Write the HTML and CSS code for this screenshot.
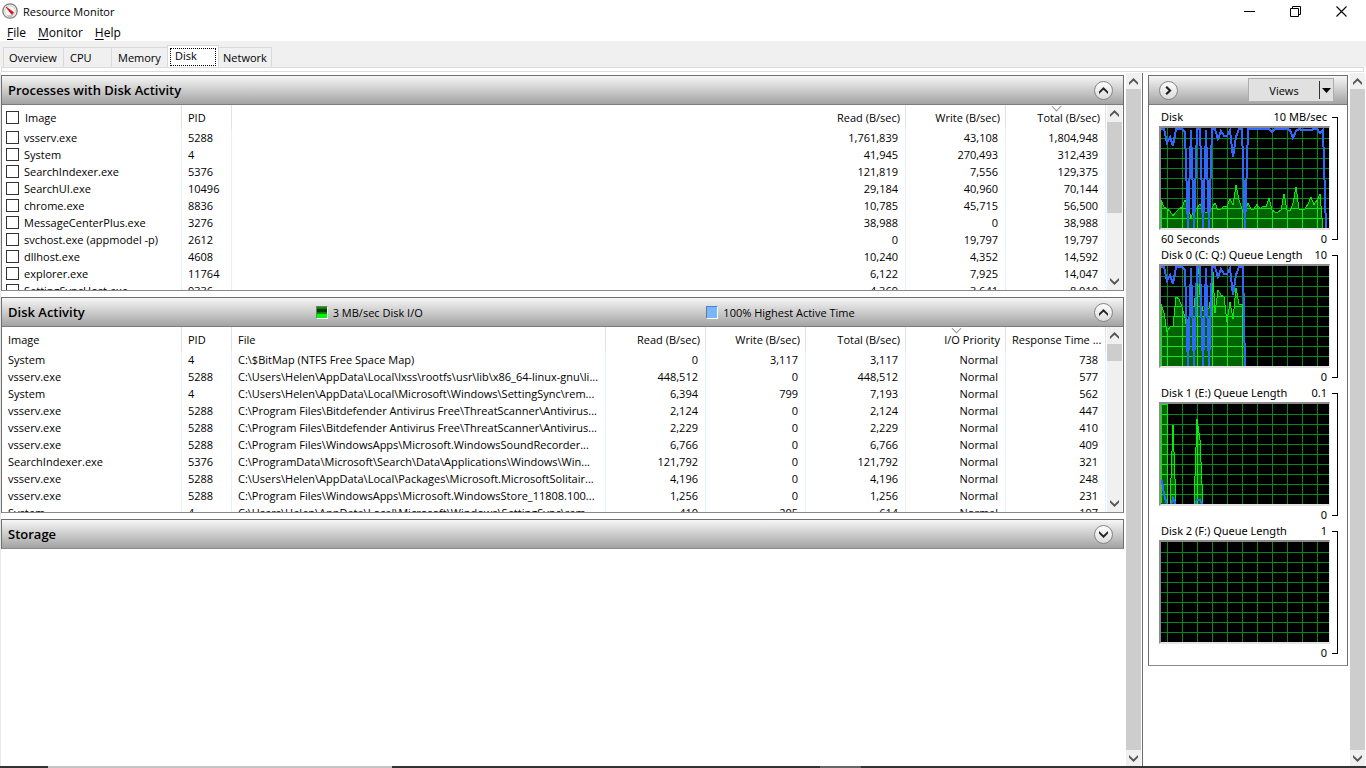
FILE: index.html
```
<!DOCTYPE html>
<html lang="en">
<head>
<meta charset="utf-8">
<title>Resource Monitor</title>
<link rel="stylesheet" href="styles.css">
</head>
<body>
<svg class="defs" aria-hidden="true">
  <defs>
    <symbol id="up" viewBox="0 0 9 7"><path d="M0 4.5 4.5 0 9 4.5V7L4.5 2.8 0 7z" fill="currentColor"/></symbol>
    <symbol id="down" viewBox="0 0 9 7"><path d="M0 2.5 4.5 7 9 2.5V0L4.5 4.2 0 0z" fill="currentColor"/></symbol>
    <path id="grid" d="M6.5 0V100M21.5 0V100M36.5 0V100M51.5 0V100M66.5 0V100M81.5 0V100M96.5 0V100M111.5 0V100M126.5 0V100M141.5 0V100M156.5 0V100M0 10.5H168M0 20.5H168M0 30.5H168M0 40.5H168M0 50.5H168M0 60.5H168M0 70.5H168M0 80.5H168M0 90.5H168"/>
    <path id="area0" d="M0 101V72L3 79 6 81 9 83 12 88 15 84 18 81 21 79 24 72 27 78 30 90 33 80 36 80 39 76 42 82 45 85 48 84 51 80 54 75 57 82 60 81 63 78 66 78 69 71 72 77 75 57 78 72 81 81 84 85 87 75 90 81 93 81 96 76 99 81 102 78 105 79 108 70 111 82 114 84 117 84 120 82 123 66 126 82 129 83 132 75 135 59 138 81 141 81 144 81 147 76 150 69 153 77 156 72 159 66 162 101z"/>
    <path id="area1" d="M0 101V38L3 47 6 66 9 61 12 60 15 31 18 33 21 41 24 52 27 69 30 42 33 40 36 15 38 2 39 29 42 45 48 42 51 25 52 6 54 47 57 24 60 29 63 31 66 56 69 36 72 53 75 22 78 38 82 38 84 101z"/>
    <path id="area2" d="M0 101 1 0H6L7 101zM9 101 12 21 15 101zM33 101 36 15 39 36 42 101z"/>
    <clipPath id="clip0"><use href="#area0"/></clipPath>
    <clipPath id="clip1"><use href="#area1"/></clipPath>
    <clipPath id="clip2"><use href="#area2"/></clipPath>
  </defs>
</svg>

<header class="titlebar">
  <svg class="app-icon" viewBox="0 0 16 16" aria-hidden="true">
    <circle cx="8" cy="8" r="7.2" fill="#f6f6f6" stroke="#7d7d7d" stroke-width="1.300"/>
    <circle cx="8" cy="8" r="5.300" fill="#fdf6f4" stroke="#c9c4c0" stroke-width=".8"/>
    <path d="M4 4 11.500 9.500 10 11.500z" fill="#d8141c" stroke="#c8141c" stroke-width=".9" stroke-linejoin="round"/>
    <path d="M5.500 13h5" stroke="#aaa" stroke-width="1"/>
  </svg>
  <h1>Resource Monitor</h1>
  <div class="window-controls">
    <button type="button" aria-label="Minimize"><svg width="11" height="11" viewBox="0 0 11 11"><path d="M0 5.5H11" stroke="#000"/></svg></button>
    <button type="button" aria-label="Restore"><svg width="11" height="11" viewBox="0 0 11 11" fill="none" stroke="#000"><path d="M.5 2.500h8v8h-8zM2.500 2.500V.5h8v8H8.500"/></svg></button>
    <button type="button" aria-label="Close"><svg width="11" height="11" viewBox="0 0 11 11"><path d="M.5.5l10 10M10.500.5l-10 10" stroke="#000" stroke-width="1.1"/></svg></button>
  </div>
</header>

<nav class="menubar" aria-label="Menu">
  <button type="button"><u>F</u>ile</button>
  <button type="button"><u>M</u>onitor</button>
  <button type="button"><u>H</u>elp</button>
</nav>

<div class="tabs" role="tablist">
  <button type="button" role="tab" class="tab tab-overview">Overview</button>
  <button type="button" role="tab" class="tab tab-cpu">CPU</button>
  <button type="button" role="tab" class="tab tab-memory">Memory</button>
  <button type="button" role="tab" class="tab tab-disk selected" aria-selected="true"><span>Disk</span></button>
  <button type="button" role="tab" class="tab tab-network">Network</button>
</div>
<div class="tab-edge"></div>

<div class="workspace">
  <main class="sections">
    <section class="panel">
      <div class="bar">
        <h2>Processes with Disk Activity</h2>
        <button type="button" class="round" aria-label="Collapse"><svg width="9" height="7"><use href="#up"/></svg></button>
      </div>
      <div class="list">
        <table>
          <colgroup><col class="c-image"><col class="c-pid"><col><col class="c-num"><col class="c-num"></colgroup>
          <thead><tr>
            <th><label><input type="checkbox">Image</label></th><th>PID</th><th class="n">Read (B/sec)</th><th class="n">Write (B/sec)</th>
            <th class="n sorted">Total (B/sec)</th>
          </tr></thead>
          <tbody>
            <tr><td><label><input type="checkbox">vsserv.exe</label></td><td>5288</td><td>1,761,839</td><td>43,108</td><td>1,804,948</td></tr>
            <tr><td><label><input type="checkbox">System</label></td><td>4</td><td>41,945</td><td>270,493</td><td>312,439</td></tr>
            <tr><td><label><input type="checkbox">SearchIndexer.exe</label></td><td>5376</td><td>121,819</td><td>7,556</td><td>129,375</td></tr>
            <tr><td><label><input type="checkbox">SearchUI.exe</label></td><td>10496</td><td>29,184</td><td>40,960</td><td>70,144</td></tr>
            <tr><td><label><input type="checkbox">chrome.exe</label></td><td>8836</td><td>10,785</td><td>45,715</td><td>56,500</td></tr>
            <tr><td><label><input type="checkbox">MessageCenterPlus.exe</label></td><td>3276</td><td>38,988</td><td>0</td><td>38,988</td></tr>
            <tr><td><label><input type="checkbox">svchost.exe (appmodel -p)</label></td><td>2612</td><td>0</td><td>19,797</td><td>19,797</td></tr>
            <tr><td><label><input type="checkbox">dllhost.exe</label></td><td>4608</td><td>10,240</td><td>4,352</td><td>14,592</td></tr>
            <tr><td><label><input type="checkbox">explorer.exe</label></td><td>11764</td><td>6,122</td><td>7,925</td><td>14,047</td></tr>
            <tr><td><label><input type="checkbox">SettingSyncHost.exe</label></td><td>9336</td><td>4,369</td><td>3,641</td><td>8,010</td></tr>
          </tbody>
        </table>
        <div class="scrollbar">
          <button type="button" aria-label="Scroll up"><svg width="9" height="7"><use href="#up"/></svg></button>
          <div class="thumb half"></div>
          <button type="button" class="end" aria-label="Scroll down"><svg width="9" height="7"><use href="#down"/></svg></button>
        </div>
      </div>
    </section>

    <section class="panel">
      <div class="bar">
        <div class="bar-grid">
          <h2>Disk Activity</h2>
          <span class="legend"><i class="swatch io"></i>3 MB/sec Disk I/O</span>
          <span class="legend"><i class="swatch active"></i>100% Highest Active Time</span>
        </div>
        <button type="button" class="round" aria-label="Collapse"><svg width="9" height="7"><use href="#up"/></svg></button>
      </div>
      <div class="list">
        <table class="files">
          <colgroup><col class="c-image"><col class="c-pid"><col><col class="c-num"><col class="c-num"><col class="c-num"><col class="c-num"><col class="c-num"></colgroup>
          <thead><tr>
            <th>Image</th><th>PID</th><th>File</th><th class="n">Read (B/sec)</th><th class="n">Write (B/sec)</th><th class="n">Total (B/sec)</th><th class="n sorted">I/O Priority</th><th class="n">Response Time ...</th>
          </tr></thead>
          <tbody>
            <tr><td>System</td><td>4</td><td>C:\$BitMap (NTFS Free Space Map)</td><td>0</td><td>3,117</td><td>3,117</td><td>Normal</td><td>738</td></tr>
            <tr><td>vsserv.exe</td><td>5288</td><td>C:\Users\Helen\AppData\Local\lxss\rootfs\usr\lib\x86_64-linux-gnu\li...</td><td>448,512</td><td>0</td><td>448,512</td><td>Normal</td><td>577</td></tr>
            <tr><td>System</td><td>4</td><td>C:\Users\Helen\AppData\Local\Microsoft\Windows\SettingSync\rem...</td><td>6,394</td><td>799</td><td>7,193</td><td>Normal</td><td>562</td></tr>
            <tr><td>vsserv.exe</td><td>5288</td><td>C:\Program Files\Bitdefender Antivirus Free\ThreatScanner\Antivirus...</td><td>2,124</td><td>0</td><td>2,124</td><td>Normal</td><td>447</td></tr>
            <tr><td>vsserv.exe</td><td>5288</td><td>C:\Program Files\Bitdefender Antivirus Free\ThreatScanner\Antivirus...</td><td>2,229</td><td>0</td><td>2,229</td><td>Normal</td><td>410</td></tr>
            <tr><td>vsserv.exe</td><td>5288</td><td>C:\Program Files\WindowsApps\Microsoft.WindowsSoundRecorder...</td><td>6,766</td><td>0</td><td>6,766</td><td>Normal</td><td>409</td></tr>
            <tr><td>SearchIndexer.exe</td><td>5376</td><td>C:\ProgramData\Microsoft\Search\Data\Applications\Windows\Win...</td><td>121,792</td><td>0</td><td>121,792</td><td>Normal</td><td>321</td></tr>
            <tr><td>vsserv.exe</td><td>5288</td><td>C:\Users\Helen\AppData\Local\Packages\Microsoft.MicrosoftSolitair...</td><td>4,196</td><td>0</td><td>4,196</td><td>Normal</td><td>248</td></tr>
            <tr><td>vsserv.exe</td><td>5288</td><td>C:\Program Files\WindowsApps\Microsoft.WindowsStore_11808.100...</td><td>1,256</td><td>0</td><td>1,256</td><td>Normal</td><td>231</td></tr>
            <tr><td>System</td><td>4</td><td>C:\Users\Helen\AppData\Local\Microsoft\Windows\SettingSync\rem...</td><td>410</td><td>205</td><td>614</td><td>Normal</td><td>197</td></tr>
          </tbody>
        </table>
        <div class="scrollbar">
          <button type="button" aria-label="Scroll up"><svg width="9" height="7"><use href="#up"/></svg></button>
          <div class="thumb short"></div>
          <button type="button" class="end" aria-label="Scroll down"><svg width="9" height="7"><use href="#down"/></svg></button>
        </div>
      </div>
    </section>

    <section class="panel">
      <div class="bar">
        <h2>Storage</h2>
        <button type="button" class="round" aria-label="Expand"><svg width="9" height="7"><use href="#down"/></svg></button>
      </div>
    </section>
  </main>
  <div class="scrollbar outer">
    <button type="button" aria-label="Scroll up"><svg width="9" height="7"><use href="#up"/></svg></button>
    <div class="thumb full"></div>
    <button type="button" class="end" aria-label="Scroll down"><svg width="9" height="7"><use href="#down"/></svg></button>
  </div>

  <aside class="side">
    <div class="panel">
      <div class="bar side-bar">
        <button type="button" class="round" aria-label="Hide graphs"><svg width="7" height="9" viewBox="0 0 7 9"><path d="M1.200.800 5 4.500 1.200 8.200" fill="none" stroke="currentColor" stroke-width="2.200"/></svg></button>
        <div class="views">
          <button type="button" class="views-main">Views</button>
          <button type="button" class="views-drop" aria-label="Choose view"><svg width="9" height="5" viewBox="0 0 9 5"><path d="M0 0H9L4.500 5z"/></svg></button>
        </div>
      </div>
      <div class="graphs">
        <figure class="graph">
          <div class="cap"><span>Disk</span><span>10 MB/sec</span></div>
          <svg class="plot" viewBox="0 0 168 100" preserveAspectRatio="none">
            <use href="#grid" class="g"/>
            <use href="#area0" class="a"/>
            <use href="#grid" class="gb" clip-path="url(#clip0)"/>
            <path class="b" d="M0 1 3 1 6 15 9 9 12 18 15 1H21L24 4 27 101 30 2 33 101 36 1H39L42 101 45 2 48 101 51 1H54L57 11 60 3 63 8H66L69 2 72 29 75 9 78 1H81L84 101 87 1H108L111 4 114 1H126L129 2 132 10 135 3 138 1 141 2H150L153 1H156L159 5 162 2 165 101"/>
          </svg>
          <div class="cap foot"><span>60 Seconds</span><span>0</span></div>
          <div class="bracket"></div>
        </figure>
        <figure class="graph">
          <div class="cap"><span>Disk 0 (C: Q:) Queue Length</span><span>10</span></div>
          <svg class="plot" viewBox="0 0 168 100" preserveAspectRatio="none">
            <use href="#grid" class="g"/>
            <use href="#area1" class="a"/>
            <use href="#grid" class="gb" clip-path="url(#clip1)"/>
            <path class="b" d="M0 1 3 1 6 15 9 9 12 18 15 1H21L24 4 27 101 30 2 33 101 36 1H39L42 101 45 2 48 101 51 1H54L57 11 60 3 63 8H66L69 2 72 29 75 9 78 1H82L84 101"/>
          </svg>
          <div class="cap foot"><span></span><span>0</span></div>
          <div class="bracket"></div>
        </figure>
        <figure class="graph">
          <div class="cap"><span>Disk 1 (E:) Queue Length</span><span>0.1</span></div>
          <svg class="plot" viewBox="0 0 168 100" preserveAspectRatio="none">
            <use href="#grid" class="g"/>
            <use href="#area2" class="a"/>
            <use href="#grid" class="gb" clip-path="url(#clip2)"/>
            <path class="b" d="M1 76 3 90 6 101M10 101 12 94 15 101M34 101 36 96H39L42 101"/>
          </svg>
          <div class="cap foot"><span></span><span>0</span></div>
          <div class="bracket"></div>
        </figure>
        <figure class="graph">
          <div class="cap"><span>Disk 2 (F:) Queue Length</span><span>1</span></div>
          <svg class="plot" viewBox="0 0 168 100" preserveAspectRatio="none">
            <use href="#grid" class="g"/>
          </svg>
          <div class="cap foot"><span></span><span>0</span></div>
          <div class="bracket"></div>
        </figure>
      </div>
    </div>
  </aside>
  <div class="scrollbar outer">
    <button type="button" aria-label="Scroll up"><svg width="9" height="7"><use href="#up"/></svg></button>
    <div class="thumb full"></div>
    <button type="button" class="end" aria-label="Scroll down"><svg width="9" height="7"><use href="#down"/></svg></button>
  </div>
</div>
<footer class="taskbar"><i class="lit"></i><i class="dim"></i></footer>
</body>
</html>
```
FILE: styles.css
```
* { box-sizing: border-box; }

body {
  margin: 0;
  min-height: 100vh;
  display: flex;
  flex-direction: column;
  background: #fff;
  color: #000;
  font: 11px/17px "Open Sans", "Noto Sans", sans-serif;
}

button {
  margin: 0;
  padding: 0;
  border: 0;
  background: none;
  color: inherit;
  font: inherit;
}

h1, h2, figure { margin: 0; }
.defs { position: absolute; width: 0; height: 0; }

/* Title bar and menu */
.titlebar { display: flex; align-items: center; height: 22px; padding-left: 2px; }
.app-icon { width: 16px; height: 16px; margin-right: 5px; }
.titlebar h1 { font-size: 11px; font-weight: 400; }
.window-controls { display: flex; margin-left: auto; padding-right: 2px; }
.window-controls button { display: flex; align-items: center; justify-content: center; width: 46px; height: 21px; }
.menubar { display: flex; gap: 12px; height: 19px; padding-left: 7px; font-size: 12px; line-height: 21px; }
.menubar u { text-underline-offset: 2px; }

/* Tabs */
.tabs { display: flex; align-items: flex-end; height: 26px; padding-left: 3px; background: #f0f0f0; }
.tab {
  height: 20px;
  padding: 0 5px;
  border: 1px solid #d9d9d9;
  border-width: 1px 1px 0 0;
  text-align: left;
  line-height: 19px;
}
.tab-overview { width: 61px; border-left-width: 1px; }
.tab-cpu { width: 48px; padding-left: 6px; }
.tab-memory { width: 55px; padding-left: 6px; border-right: 0; }
.tab-network { width: 53px; padding-left: 4px; }
.tab-disk { width: 52px; height: 22px; padding: 2px; border-left-width: 1px; background: #fff; }
.tab-disk span { display: block; height: 18px; padding-left: 4px; border: 1px dotted #000; line-height: 14px; }
.tab-edge { height: 5px; margin: 0 2px 0 1px; border: 1px solid #dcdcdc; }

/* Work area */
.workspace { flex: 1; display: flex; padding-top: 1px; border-left: 1px solid #e8e8e8; }
.sections { flex: 1; min-width: 0; display: flex; flex-direction: column; gap: 6px; padding: 2px 2px 0 0; }
.panel { border: 1px solid #6e6e6e; border-bottom-color: #8a8a8a; }
.bar {
  display: flex;
  align-items: center;
  justify-content: space-between;
  height: 29px;
  padding: 0 10px 0 6px;
  border-bottom: 1px solid #7c7c7c;
  background: linear-gradient(#f6f6f6, #a3a3a3);
}
.bar:last-child { height: 28px; border-bottom: 0; }
.bar-grid { flex: 1; display: grid; grid-template-columns: 308fr 391fr 388fr; }
h2 { font-size: 13px; font-weight: 600; }
.legend { display: flex; align-items: center; gap: 5px; }
.swatch { width: 12px; height: 13px; border: 1px solid #777; border-right-color: #fff; border-bottom-color: #fff; }
.swatch.io { background: radial-gradient(circle, #003c00 0 40%, #009300 60%) 0 0 / 2px 7px repeat-x, #00f800; }
.swatch.active { background: #76b7ff; border-top-color: #4a7fe8; }
.round {
  display: flex;
  align-items: center;
  justify-content: center;
  width: 19px;
  height: 19px;
  border: 1px solid #858585;
  border-radius: 50%;
  background: linear-gradient(#fdfdfd, #dcdcdc);
  color: #222;
}

/* Lists */
.list { display: flex; height: 185px; overflow: hidden; }
table { flex: 1; width: 0; align-self: flex-start; table-layout: fixed; border-collapse: separate; border-spacing: 0; }
.c-image { width: 180px; }
.c-pid { width: 50px; }
.c-num { width: 100px; }
th, td { overflow: hidden; white-space: nowrap; text-align: left; border-right: 1px solid #e8f1fa; }
th { position: relative; height: 24px; padding: 0 5px 0 6px; border-color: #e2e2e2; font-weight: 400; }
td { height: 17px; padding: 0 7px 0 6px; line-height: 17px; }
th.n, td:nth-child(n + 3) { text-align: right; }
.files td:nth-child(3) { text-align: left; padding-right: 0; }
th label, td label { display: flex; align-items: center; gap: 5px; height: 17px; }
label { margin-left: -2px; }
th label { gap: 6px; }
input[type="checkbox"] { appearance: none; flex: none; width: 13px; height: 13px; margin: 0; border: 1px solid #333; background: #fff; }
.sorted::before {
  content: "";
  position: absolute;
  top: -2px;
  left: 47px;
  width: 6px;
  height: 6px;
  border: solid #999;
  border-width: 0 1px 1px 0;
  transform: rotate(45deg);
}

/* Scrollbars */
.scrollbar { display: flex; flex-direction: column; flex: none; width: 16px; padding-right: 1px; background: #f0f0f0 content-box; }
.list .scrollbar { width: 17px; padding-left: 1px; }
.scrollbar button { display: flex; align-items: center; justify-content: center; height: 17px; color: #555; }
.scrollbar .end { margin-top: auto; }
.thumb { background: #cdcdcd; }
.thumb.half { height: 91px; }
.thumb.short { height: 17px; }
.thumb.full { flex: 1; }
.outer button { height: 16px; }

/* Graph pane */
.side { width: 208px; padding: 2px 2px 0 5px; border-left: 1px solid #6e6e6e; }
.side-bar { padding: 0 13px 0 10px; }
.views { display: flex; width: 86px; height: 24px; border: 1px solid #adadad; background: #e1e1e1; font-size: 11px; }
.views-main { flex: 1; }
.views-drop { display: flex; align-items: center; justify-content: center; width: 14px; margin: 2px 0; border-left: 1px solid #333; }
.graphs { padding: 3px 9px 5px 10px; }
.graph { display: grid; grid-template-columns: 1fr 6px; column-gap: 2px; }
.graph > * { grid-column: 1; }
.cap {
  display: flex;
  justify-content: space-between;
  height: 18px;
  padding: 0 3px 0 2px;
  font-family: "Noto Sans", "Open Sans", sans-serif;
  white-space: nowrap;
}
.cap.foot { height: 16px; }
.plot {
  display: block;
  width: 100%;
  height: 104px;
  border: solid #8c8c8c;
  border-width: 2px 1px 2px 2px;
  border-right-color: #e3e3e3;
  border-bottom-color: #e3e3e3;
  background: #000;
}
.graph .bracket {
  grid-column: 2;
  grid-row: 1 / span 3;
  margin: 9px 0 6px;
  border: 1px solid #000;
  border-left: 0;
}
.g { stroke: #008a1a; shape-rendering: crispEdges; }
.gb { stroke: #14e61e; shape-rendering: crispEdges; }
.a { fill: #006400; stroke: #00f000; shape-rendering: crispEdges; }
.b { fill: none; stroke: #2f67ff; stroke-width: 2; shape-rendering: crispEdges; }

/* Edge of the desktop taskbar */
.taskbar { display: flex; height: 2px; background: #333; padding-left: 48px; }
.taskbar .lit { width: 344px; background: #c4c4c4; }
.taskbar .dim { width: 41px; margin-left: 428px; background: #666; }
```
